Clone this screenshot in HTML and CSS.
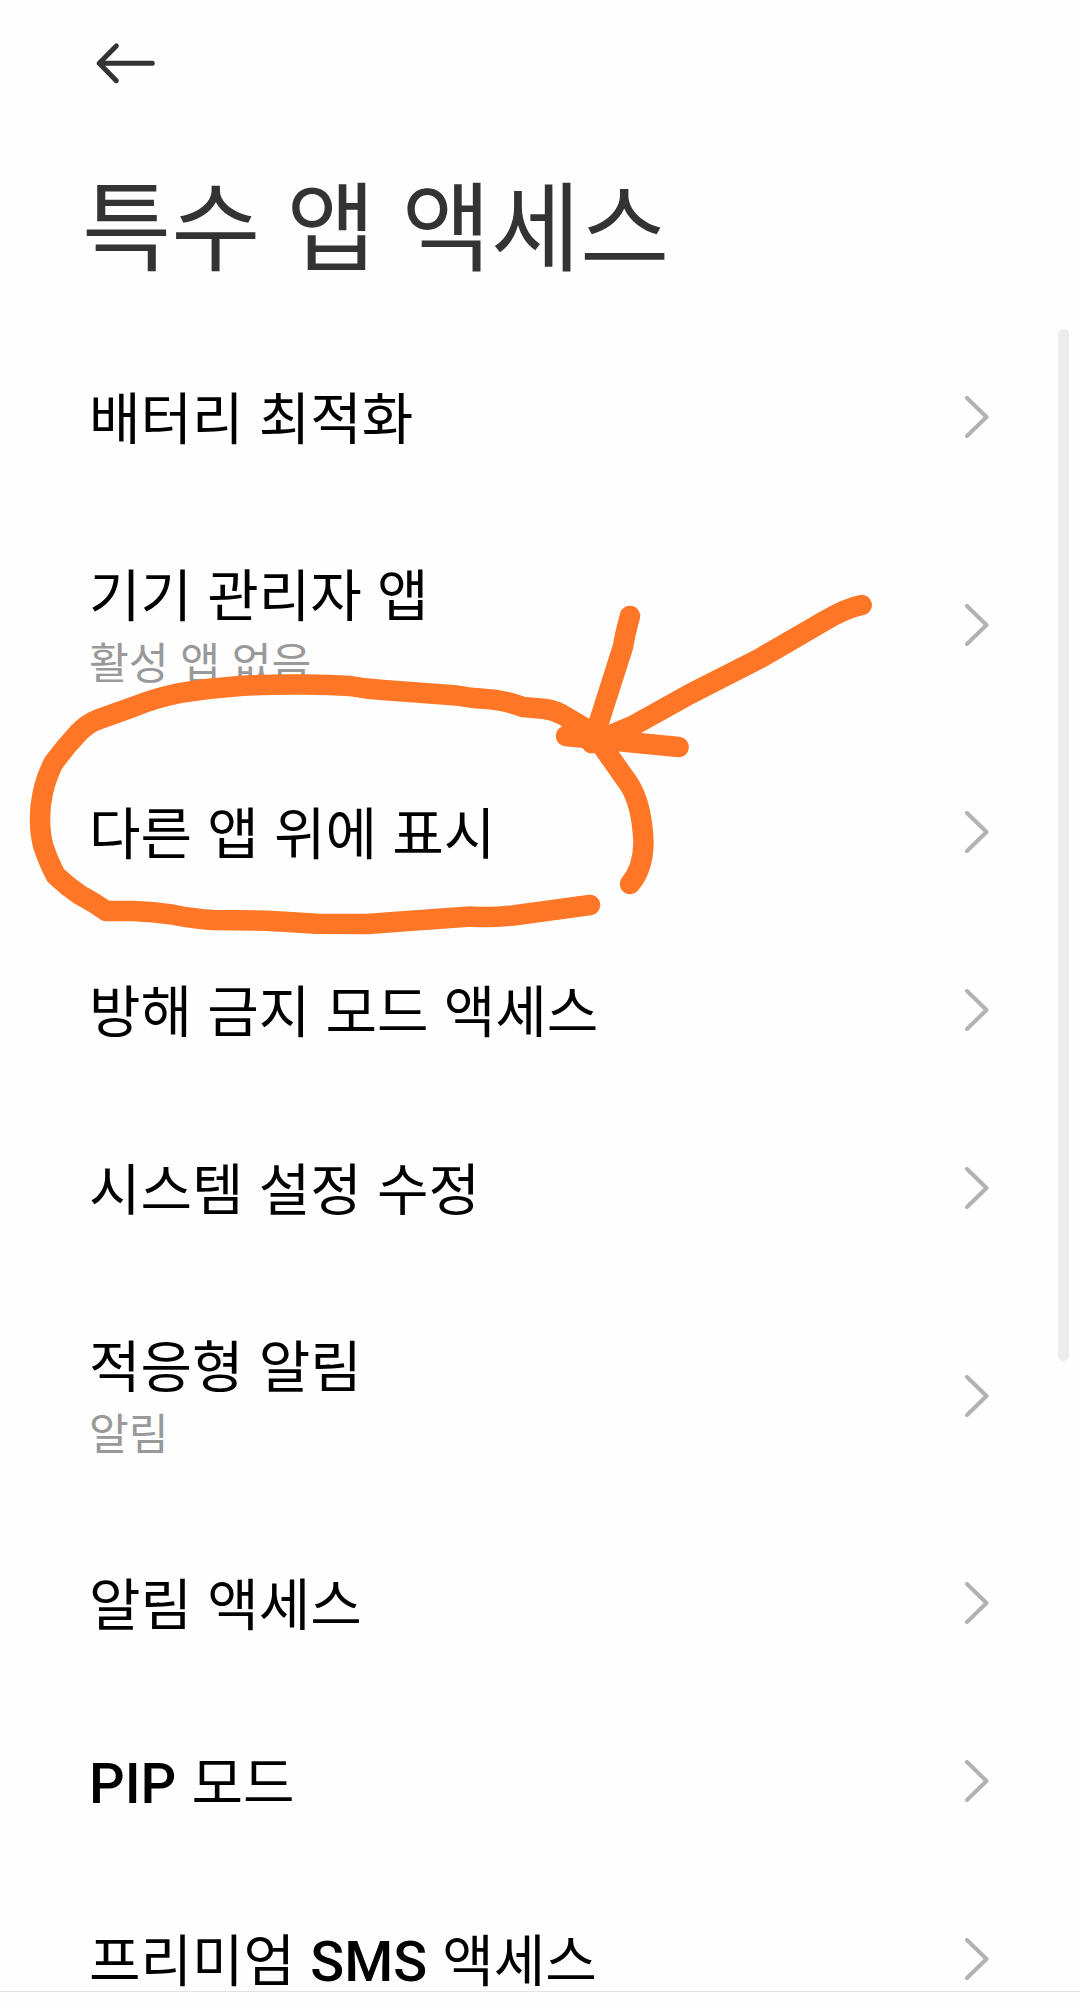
FILE: index.html
```html
<!DOCTYPE html>
<html lang="ko">
<head>
  <meta charset="UTF-8">
  <meta name="viewport" content="width=device-width, initial-scale=1.0">
  <title>특수 앱 액세스</title>
  <link rel="stylesheet" href="styles.css">
</head>
<body>
  <div class="screen">
    <header class="header">
      <svg class="back" viewBox="0 0 64 48">
        <path d="M59.300 24.300H6.200M23.300 6.900L6.200 24.300L23.300 41.700" class="back-line"/>
      </svg>
      <h1>특수 앱 액세스</h1>
    </header>

    <main class="list">
      <div class="row">
        <div class="label">배터리 최적화</div>
        <svg class="chevron" viewBox="0 0 24 42"><path d="M2 2L21.500 21L2 40"/></svg>
      </div>
      <div class="row tall">
        <div class="label">기기 관리자 앱<small>활성 앱 없음</small></div>
        <svg class="chevron" viewBox="0 0 24 42"><path d="M2 2L21.500 21L2 40"/></svg>
      </div>
      <div class="row">
        <div class="label">다른 앱 위에 표시</div>
        <svg class="chevron" viewBox="0 0 24 42"><path d="M2 2L21.500 21L2 40"/></svg>
      </div>
      <div class="row">
        <div class="label">방해 금지 모드 액세스</div>
        <svg class="chevron" viewBox="0 0 24 42"><path d="M2 2L21.500 21L2 40"/></svg>
      </div>
      <div class="row">
        <div class="label">시스템 설정 수정</div>
        <svg class="chevron" viewBox="0 0 24 42"><path d="M2 2L21.500 21L2 40"/></svg>
      </div>
      <div class="row tall">
        <div class="label">적응형 알림<small>알림</small></div>
        <svg class="chevron" viewBox="0 0 24 42"><path d="M2 2L21.500 21L2 40"/></svg>
      </div>
      <div class="row">
        <div class="label">알림 액세스</div>
        <svg class="chevron" viewBox="0 0 24 42"><path d="M2 2L21.500 21L2 40"/></svg>
      </div>
      <div class="row">
        <div class="label"><b>PIP</b> 모드</div>
        <svg class="chevron" viewBox="0 0 24 42"><path d="M2 2L21.500 21L2 40"/></svg>
      </div>
      <div class="row">
        <div class="label">프리미엄 <b>SMS</b> 액세스</div>
        <svg class="chevron" viewBox="0 0 24 42"><path d="M2 2L21.500 21L2 40"/></svg>
      </div>
      <div class="scrollbar"></div>
    </main>
    <footer class="footer"></footer>

    <!-- hand drawn marker over the list -->
    <svg class="marker" viewBox="0 0 1080 2008">
      <path d="M590 905L513 915.500Q490 918 470 916.500L367 924L317 923.700L267 920.700L213 920Q195 919 173 914.700Q153 911.500 133 911L106 911Q95 903 80 895Q67 886 56 875.700Q49 863 43.500 846.700Q40 835 40 818Q40 806 42.700 793.300Q46 778 53.300 763.300Q65 747 78.300 733Q87 724 96.700 720L133 707Q155 698 180 693Q210 688 240 686Q265 684.500 293 684.500Q325 684 350 686Q366 689 383 690L456.700 695.500Q470 698 483 698.700Q505 700 523 707L545 709Q553 710 562 714.500L590 731L605 750L629 784Q642 804 643.500 843Q643 869 630 884"/>
      <path d="M861.700 605Q846 608 823 621.700L760 658.300L690 694L633 725.700L591.700 743"/>
      <path d="M630 616Q625 634 623 646.700L598 725L591.700 743"/>
      <path d="M566 736L678.700 747"/>
    </svg>
  </div>
</body>
</html>
```
FILE: styles.css
```css
* {
  box-sizing: border-box;
}

body {
  margin: 0;
  background-color: #fefefe;
  font-family: "Noto Sans CJK KR", sans-serif;
}

.screen {
  position: relative;
  display: flex;
  flex-direction: column;
  width: 1080px;
  height: 2008px;
  overflow: hidden;
}

.header {
  height: 328px;
  padding: 39px 82px 0;
}

.back {
  display: block;
  width: 64px;
  height: 48px;
  margin-left: 11px;
}

.back-line {
  fill: none;
  stroke: #333;
  stroke-width: 5;
  stroke-linecap: round;
  stroke-linejoin: round;
}

h1 {
  margin: 62px 0 0;
  font-size: 97px;
  font-weight: 400;
  line-height: 144px;
  word-spacing: -1.2px;
  color: #333;
  white-space: nowrap;
}

.list {
  position: relative;
  flex: 1;
  overflow: hidden;
}

.row {
  display: flex;
  align-items: center;
  justify-content: space-between;
  height: 178px;
  padding: 0 91px 0 89px;
}

.tall {
  height: 237px;
}

.label {
  padding-bottom: 5px;
  font-size: 56px;
  line-height: 76px;
  word-spacing: -0.5px;
  color: #000;
  white-space: nowrap;
}

.label b {
  font-family: Roboto, sans-serif;
  font-weight: 500;
  line-height: 0;
}

.label small {
  display: block;
  font-size: 43.3px;
  line-height: 61px;
  color: #999;
}

.chevron {
  width: 24px;
  height: 42px;
  fill: none;
  stroke: #b2b2b2;
  stroke-width: 4;
  stroke-linecap: round;
  stroke-linejoin: round;
}

.scrollbar {
  position: absolute;
  top: 1px;
  right: 11px;
  width: 11px;
  height: 1032px;
  border-radius: 6px;
  background-color: #ececec;
}

.footer {
  height: 17px;
  border-top: 1px solid #e2e2e2;
}

.marker {
  position: absolute;
  top: 0;
  left: 0;
  width: 1080px;
  height: 2008px;
  fill: none;
  stroke: #ff7627;
  stroke-width: 20.5;
  stroke-linecap: round;
  stroke-linejoin: round;
}
```
